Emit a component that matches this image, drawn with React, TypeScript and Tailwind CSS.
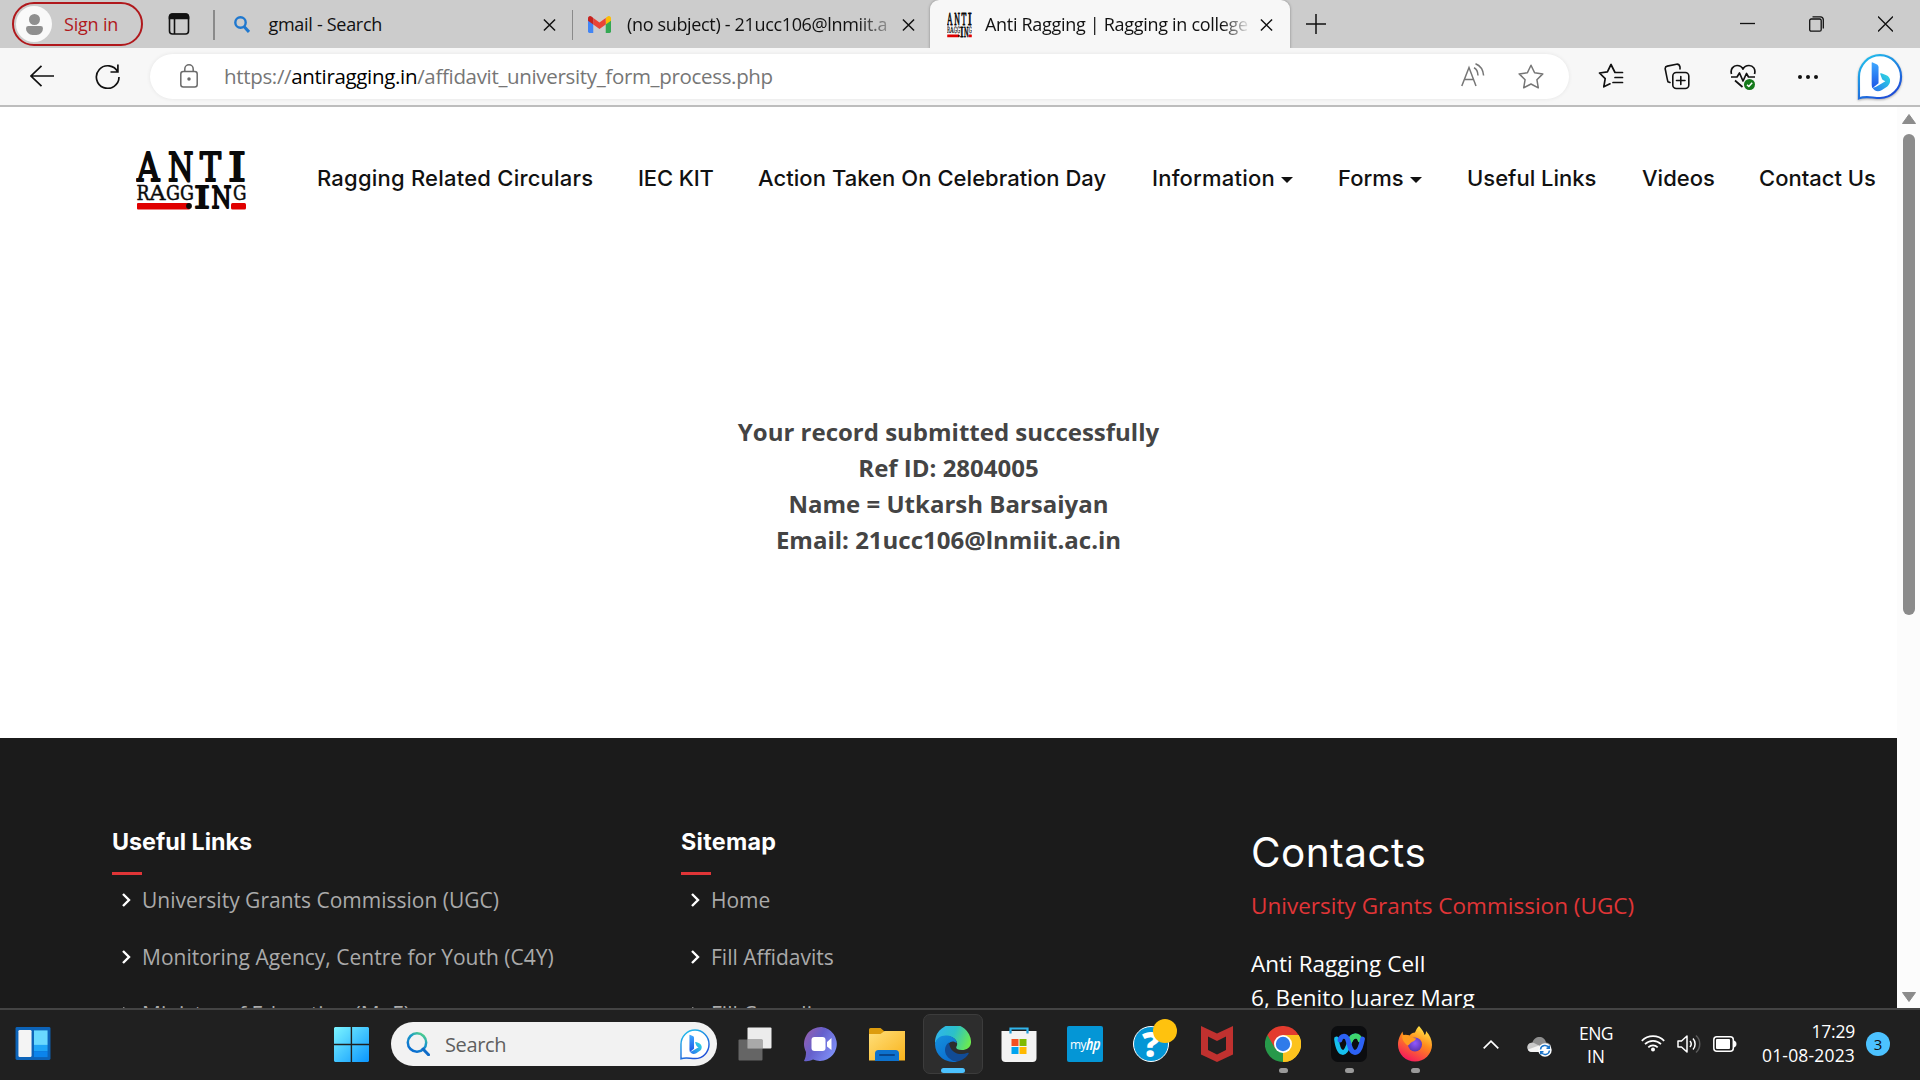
import type { ReactNode } from "react";

function BingMark({ className }: { className: string }) {
  return (
    <svg viewBox="0 0 46 47" className={className} fill="none">
      <defs>
        <linearGradient id="bingRing" x1="0" y1="0" x2="0.6" y2="1">
          <stop offset="0" stopColor="#22c8ee" />
          <stop offset="1" stopColor="#1d4fd8" />
        </linearGradient>
        <linearGradient id="bingStem" x1="0" y1="0" x2="0" y2="1">
          <stop offset="0" stopColor="#3fa8ff" />
          <stop offset="1" stopColor="#1b55e6" />
        </linearGradient>
        <linearGradient id="bingArm" x1="1" y1="0" x2="0" y2="1">
          <stop offset="0" stopColor="#2ddfe0" />
          <stop offset="1" stopColor="#2a72f0" />
        </linearGradient>
      </defs>
      <path d="M23 1.2C34.800 1.200 44.500 11 44.500 23.200S34.800 45 23 45C15 45 9 42.500 1.500 45.300C1.600 39 1.500 35 1.500 23.200C1.500 11 11.200 1.200 23 1.200Z" fill="#fff" stroke="url(#bingRing)" strokeWidth="2.200" />
      <path d="M15 8.500L19.500 10.500C20.800 11.200 21.500 12 21.500 13.500V30L15.200 35C14.700 33.500 14.500 32 14.500 30V9Z" fill="url(#bingStem)" />
      <path d="M15.200 34C17 38.500 21.500 39 25 36.800L30.500 33.200C33.800 30.600 34.500 25.500 31 22.600C29.500 21.300 26 20.200 24.200 19.600C23.300 19.400 23 20 23.300 20.800L25 25.200C25.300 26 25.800 26.400 26.500 26.800L28.500 27.800L19.500 33.200C17.800 34.200 16.300 34.500 15.200 34Z" fill="url(#bingArm)" />
    </svg>
  );
}

function AntiLogo({ className }: { className: string }) {
  const big: [string, number, number][] = [["A", 136, 22.5], ["N", 167, 25.5], ["T", 199, 21], ["I", 227, 18]];
  const small: [string, number, number][] = [["R", 135.5, 13], ["A", 148.5, 16], ["G", 165, 14], ["G", 179, 14], ["G", 232, 13.5]];
  return (
    <svg viewBox="135 149 111 61" preserveAspectRatio="none" className={className} fontFamily="'DejaVu Serif', serif">
      <rect x="136" y="202" width="53" height="6.500" rx="1" fill="#e00000" />
      <rect x="230" y="202" width="15" height="6.500" rx="1.500" fill="#e00000" />
      <g fill="#0a0a0a" stroke="#0a0a0a" strokeWidth="2" strokeLinejoin="round">
        {big.map(([c, x, w]) => (
          <text key={c} x={x} y="179.800" fontSize="38.500" textLength={w} lengthAdjust="spacingAndGlyphs">{c}</text>
        ))}
      </g>
      <g fill="#0a0a0a" stroke="#0a0a0a" strokeWidth="0.500">
        {small.map(([c, x, w]) => (
          <text key={x} x={x} y="199.300" fontSize="20.500" textLength={w} lengthAdjust="spacingAndGlyphs">{c}</text>
        ))}
      </g>
      <g fill="#0a0a0a" stroke="#0a0a0a" strokeWidth="1.800" strokeLinejoin="round">
        <text x="193" y="207.300" fontSize="30" textLength="16" lengthAdjust="spacingAndGlyphs">I</text>
        <text x="210.500" y="207.300" fontSize="30" textLength="20" lengthAdjust="spacingAndGlyphs">N</text>
        <circle cx="188" cy="205" r="2" />
      </g>
    </svg>
  );
}

function CloseX({ className }: { className: string }) {
  return (
    <svg viewBox="0 0 14 14" className={className} stroke="#111" strokeWidth="1.600" fill="none">
      <path d="M1 1L13 13M13 1L1 13" />
    </svg>
  );
}

function TabStrip() {
  return (
    <div className="flex h-[48px] items-start bg-[#cccccc] text-[18px]">
      <div className="ml-[12px] mt-[2px] flex h-[44px] w-[131px] items-center rounded-full border-[2px] border-[#b0181c]">
        <div className="ml-[2px] flex h-[36px] w-[36px] flex-col items-center justify-center gap-[1px] rounded-full bg-[#f9f9f9]">
          <div className="h-[11px] w-[11px] rounded-full bg-[#8f8f8f]" />
          <div className="h-[9px] w-[17px] rounded-b-[8px] rounded-t-[3px] bg-[#8f8f8f]" />
        </div>
        <span className="ml-[12px] tracking-[-0.2px] text-[#b0181c]">Sign in</span>
      </div>
      <svg viewBox="0 0 22 22" className="ml-[25px] mt-[13px] h-[22px] w-[22px]" fill="none" stroke="#111" strokeWidth="1.600">
        <rect x="1.500" y="1" width="19" height="20" rx="3" />
        <path d="M1.500 5V4A3 3 0 0 1 4.500 1H17.500A3 3 0 0 1 20.500 4V5.500H1.500Z" fill="#111" />
        <path d="M6.500 6V21" />
      </svg>
      <div className="ml-[23px] mt-[10px] h-[30px] w-[1.500px] bg-[#8a8a8a]" />
      <div className="flex h-[48px] w-[357px] items-center">
        <svg viewBox="0 0 16 17" className="ml-[19px] h-[17px] w-[16px]" fill="none" stroke="#1f78cf" strokeWidth="2.400">
          <circle cx="6.500" cy="6.500" r="5.200" />
          <path d="M10 10.500L15 16" strokeWidth="3" />
        </svg>
        <span className="ml-[19px] w-[274px] whitespace-nowrap tracking-[-0.3px] text-[#111]">gmail - Search</span>
        <CloseX className="mt-[2px] h-[14px] w-[13px]" />
      </div>
      <div className="mt-[10px] h-[30px] w-[1.500px] bg-[#8a8a8a]" />
      <div className="flex h-[48px] w-[357px] items-center">
        <svg viewBox="0 0 24 18" preserveAspectRatio="none" className="ml-[15px] h-[17px] w-[23px]">
          <path d="M0 4V16.500A1.500 1.500 0 0 0 1.500 18H5.500V6Z" fill="#4285f4" />
          <path d="M24 4V16.500A1.500 1.500 0 0 1 22.500 18H18.500V6Z" fill="#34a853" />
          <path d="M18.500 2L20 .8C22 -.7 24 .5 24 2.500V5L18.500 9Z" fill="#fbbc04" />
          <path d="M5.500 9V2L12 6.800L18.500 2V9L12 13.800Z" fill="#ea4335" />
          <path d="M0 2.500C0 .5 2 -.7 4 .8L5.500 2V9L0 5Z" fill="#c5221f" />
        </svg>
        <span className="ml-[16px] w-[261px] overflow-hidden whitespace-nowrap tracking-[-0.34px] text-[#111] [mask-image:linear-gradient(to_right,black_88%,transparent_105%)]">(no subject) - 21ucc106@lnmiit.a</span>
        <CloseX className="ml-[14px] mt-[2px] h-[14px] w-[13px]" />
      </div>
      <div className="flex h-[49px] w-[360px] items-center rounded-t-[9px] bg-[#f7f7f7] shadow-[0_0_3px_rgba(0,0,0,0.35)]">
        <AntiLogo className="ml-[17px] h-[26px] w-[25px]" />
        <span className="ml-[13px] w-[263px] overflow-hidden whitespace-nowrap tracking-[-0.3px] text-[#111] [mask-image:linear-gradient(to_right,black_90%,transparent_101%)]">Anti Ragging | Ragging in college</span>
        <CloseX className="ml-[12px] mt-[1px] h-[14px] w-[13px]" />
      </div>
      <svg viewBox="0 0 20 20" className="ml-[16px] mt-[14px] h-[20px] w-[20px]" stroke="#111" strokeWidth="1.500">
        <path d="M10 0V20M0 10H20" />
      </svg>
      <div className="ml-auto mr-[27px] mt-[16px] flex gap-[54px]">
        <svg viewBox="0 0 15 16" className="h-[16px] w-[15px]" stroke="#111" strokeWidth="1.300"><path d="M0 7.500H15" /></svg>
        <svg viewBox="0 0 15 16" className="h-[16px] w-[15px]" fill="none" stroke="#111" strokeWidth="1.300">
          <rect x=".7" y="3" width="11.500" height="12.200" rx="1.500" />
          <path d="M3.500 .8H11.500A3 3 0 0 1 14.300 3.600V12.500" />
        </svg>
        <svg viewBox="0 0 15 16" className="h-[16px] w-[15px]" stroke="#111" strokeWidth="1.300"><path d="M0 .5L15 15.500M15 .5L0 15.500" /></svg>
      </div>
    </div>
  );
}

function Toolbar() {
  return (
    <div className="relative flex h-[59px] items-start border-b-2 border-[#bdbdbd] bg-[#f7f7f7] pt-[6px]">
      <svg viewBox="0 0 24 22" className="ml-[30px] mt-[11px] h-[22px] w-[24px]" fill="none" stroke="#111" strokeWidth="1.700">
        <path d="M24 11H1M11.500 .8L1 11L11.500 21.200" />
      </svg>
      <svg viewBox="0 0 25 25" className="ml-[41px] mt-[10px] h-[25px] w-[25px]" fill="none" stroke="#111" strokeWidth="1.700">
        <path d="M22.800 8A11.300 11.300 0 1 0 24 13M22.900 .5V8H15.500" />
      </svg>
      <div className="ml-[30px] flex h-[45px] w-[1419px] items-center rounded-full bg-white shadow-[0_0_4px_rgba(0,0,0,0.08)]">
        <svg viewBox="0 0 18 24" className="ml-[30px] mt-[-1px] h-[24px] w-[18px]" fill="none" stroke="#6b6b6b" strokeWidth="1.500">
          <rect x=".8" y="7.500" width="16.400" height="15.500" rx="2.500" />
          <path d="M4.800 7.500V5A4.200 4.200 0 0 1 13.200 5V7.500" />
          <circle cx="9" cy="15" r="1" fill="#6b6b6b" />
        </svg>
        <span className="ml-[26px] mt-[-1px] whitespace-nowrap text-[20.500px] tracking-[-0.33px] text-[#767676]">
          https://<span className="text-black">antiragging.in</span>/affidavit_university_form_process.php
        </span>
        <svg viewBox="0 0 24 24" className="ml-auto mt-[-4px] h-[24px] w-[24px]" fill="none" stroke="#767676" strokeWidth="1.500">
          <path d="M.8 23L8 4.500L15 23M3.500 16.500H12.500M13 4.800C15.500 6 16.800 8.500 17 12.500M14.500 .8C19 2.500 22 6.500 22.600 12.500" />
        </svg>
        <svg viewBox="0 0 26 25" className="ml-[33px] mr-[25px] h-[25px] w-[26px]" fill="none" stroke="#767676" strokeWidth="1.500" strokeLinejoin="round">
          <path d="M13 1.200L16.600 8.700L24.800 9.900L18.900 15.700L20.300 23.800L13 20L5.700 23.800L7.100 15.700L1.200 9.900L9.400 8.700Z" />
        </svg>
      </div>
      <svg viewBox="0 0 26 26" className="ml-[29px] mt-[9px] h-[26px] w-[26px]" fill="none" stroke="#111" strokeWidth="1.700" strokeLinejoin="round" strokeLinecap="round">
        <path d="M24.500 9.500H17L13 1.500L9.400 8.800L1.500 10L7.200 15.700L5.800 23.800L12 20.800M17 14.500H24.500M15 19.500H24.500" />
      </svg>
      <svg viewBox="0 0 26 28" className="ml-[40px] mt-[9px] h-[28px] w-[26px]" fill="none" stroke="#111" strokeWidth="1.600" strokeLinecap="round">
        <rect x="8.800" y="9.500" width="16" height="16" rx="3.500" />
        <path d="M16.800 13.500V21.500M12.500 17.500H21M6 19.500L4 18.800C3.500 18 1.800 8.500 1.200 6C1 4.500 2 3.400 3.300 3.100L12.500 1.200C14 1 15.500 2 16 4V6" />
      </svg>
      <svg viewBox="0 0 27 28" className="ml-[40px] mt-[10px] h-[28px] w-[27px]" fill="none" stroke="#111" strokeWidth="1.700" strokeLinejoin="round">
        <path d="M1.500 10C0 5 3.500 1.500 7 1.500C10 1.500 12 3 13 5C14 3 16 1.500 19 1.500C23 1.500 26 5 24.500 10M1 13H7L9.500 9L13 17L16.500 9.500L18.500 13H25M5 16.500L12.500 23" />
        <circle cx="19.500" cy="20.500" r="5.500" fill="#157a1b" stroke="none" />
        <path d="M17 20.700L18.800 22.500L22.200 18.800" stroke="#fff" strokeWidth="1.500" />
      </svg>
      <div className="ml-[41px] mt-[21px] flex gap-[4px]">
        <div className="h-[4px] w-[4px] rounded-full bg-[#111]" />
        <div className="h-[4px] w-[4px] rounded-full bg-[#111]" />
        <div className="h-[4px] w-[4px] rounded-full bg-[#111]" />
      </div>
      <BingMark className="ml-auto mr-[17px] mt-0 h-[46px] w-[46px] drop-shadow-[0_1px_1px_rgba(0,0,0,0.3)]" />
    </div>
  );
}

function Caret() {
  return <span className="ml-[6px] mt-[2px] border-x-[6px] border-t-[6px] border-x-transparent border-t-[#111]" />;
}

function SiteHeader() {
  return (
    <header className="flex h-[139px] items-center font-[Inter] text-[22px] font-medium text-[#111]">
      <AntiLogo className="ml-[136px] mt-[7px] h-[61px] w-[111px]" />
      <nav className="mt-[4px] flex whitespace-nowrap">
        <a className="ml-[70px] w-[321px] tracking-[0.22px]">Ragging Related Circulars</a>
        <a className="w-[120px] tracking-[-0.15px]">IEC KIT</a>
        <a className="w-[394px] tracking-[0.05px]">Action Taken On Celebration Day</a>
        <a className="flex w-[186px] items-center tracking-[0.2px]">Information<Caret /></a>
        <a className="flex w-[129px] items-center">Forms<Caret /></a>
        <a className="w-[175px]">Useful Links</a>
        <a className="w-[117px]">Videos</a>
        <a>Contact Us</a>
      </nav>
    </header>
  );
}

function LinkColumn({ title, links, className }: { title: ReactNode; links: string[]; className: string }) {
  return (
    <div className={className}>
      <h4 className="h-[43px] pt-[1px] font-[Inter] text-[23.300px] font-bold leading-[24px] text-white">{title}</h4>
      <div className="h-[3px] w-[30px] bg-[#e03537]" />
      <ul className="mt-[10px]">
        {links.map((l) => (
          <li key={l} className="flex h-[57px] items-start">
            <svg viewBox="0 0 9 14" className="ml-[10px] mt-[8px] h-[14px] w-[9px]" fill="none" stroke="#fff" strokeWidth="2.400">
              <path d="M1 1L7 7L1 13" />
            </svg>
            <span className="ml-[11px] whitespace-nowrap text-[21px] leading-[30px] text-[#aaaaaa]">{l}</span>
          </li>
        ))}
      </ul>
    </div>
  );
}

function Page() {
  return (
    <div className="flex h-[901px] overflow-hidden bg-white">
      <div className="w-[1897px]">
        <SiteHeader />
        <div className="h-[492px] pt-[168px] text-center text-[24px] font-bold leading-[36px] text-[#444]">
          <p>Your record submitted successfully</p>
          <p>Ref ID: 2804005</p>
          <p>Name = Utkarsh Barsaiyan</p>
          <p>Email: 21ucc106@lnmiit.ac.in</p>
        </div>
        <footer className="flex h-[400px] bg-[#1b1b1b] pl-[112px] pt-[91px]">
          <LinkColumn className="w-[569px]" title="Useful Links" links={["University Grants Commission (UGC)", "Monitoring Agency, Centre for Youth (C4Y)", "Ministry of Education (MoE)"]} />
          <LinkColumn className="w-[570px]" title={<span className="tracking-[0.3px]">Sitemap</span>} links={["Home", "Fill Affidavits", "Fill Compliance"]} />
          <div className="whitespace-nowrap text-[22.500px] leading-[34.500px] text-white">
            <h3 className="mt-[-1px] font-[Inter] text-[40.500px] leading-[50px] tracking-[0.5px]">Contacts</h3>
            <p className="mt-[11px] tracking-[0.02px] text-[#e03537]">University Grants Commission (UGC)</p>
            <p className="mt-[23px] tracking-[0.02px]">Anti Ragging Cell</p>
            <p className="tracking-[0.02px]">6, Benito Juarez Marg</p>
          </div>
        </footer>
      </div>
      <div className="flex w-[23px] flex-col items-center bg-[#fcfcfc]">
        <svg viewBox="0 0 14 10" className="mt-[7px] h-[10px] w-[14px]"><path d="M7 0.500L13.500 9.500H.5Z" fill="#8b8b8b" stroke="#8b8b8b" strokeLinejoin="round" /></svg>
        <div className="mt-[10px] h-[481px] w-[12px] rounded-full bg-[#8b8b8b]" />
        <svg viewBox="0 0 14 10" className="mb-[6px] mt-auto h-[10px] w-[14px]"><path d="M7 9.500L13.500 .5H.5Z" fill="#8b8b8b" stroke="#8b8b8b" strokeLinejoin="round" /></svg>
      </div>
    </div>
  );
}

function TaskItem({ children, active, running }: { children: ReactNode; active?: boolean; running?: boolean }) {
  return (
    <div className={active ? "mx-[3px] flex h-[60px] w-[60px] flex-col items-center rounded-[7px] border border-[#3c3c3c] bg-[#2d2d2d] pt-[11px]" : "flex h-[60px] w-[66px] flex-col items-center pt-[12px]"}>
      <div className="h-[36px] w-[36px]">{children}</div>
      {active && <div className="mt-[6px] h-[5px] w-[24px] rounded-full bg-[#4cc2ff]" />}
      {running && <div className="mt-[6px] h-[5px] w-[9px] rounded-full bg-[#9a9a9a]" />}
    </div>
  );
}

function Taskbar() {
  return (
    <div className="flex h-[72px] items-start border-t-2 border-[#444] bg-[#202020]">
      <svg viewBox="0 0 36 34" className="ml-[15px] mt-[17px] h-[33px] w-[36px]">
        <rect width="36" height="34" rx="1.500" fill="#0c63b8" />
        <rect x="3" y="3" width="13.500" height="28" rx="1.500" fill="#f4f4f4" />
        <rect x="19" y="3.500" width="14" height="15" fill="#69d9ff" />
        <rect x="19" y="18.500" width="14" height="6.500" fill="#1ea5f7" />
        <rect x="19" y="25" width="14" height="6" fill="#0b84ec" />
      </svg>
      <svg viewBox="0 0 35 35" className="ml-[283px] mt-[17px] h-[35px] w-[35px]">
        <defs>
          <linearGradient id="win" x1="0" y1="0" x2="35" y2="35" gradientUnits="userSpaceOnUse">
            <stop stopColor="#7cf5ff" /><stop offset="1" stopColor="#0a96ff" />
          </linearGradient>
        </defs>
        <path d="M1 0H16.700V16.700H0V1ZM18.100 0H34L35 1V16.700H18.100ZM0 18.300H16.700V35H1L0 34ZM18.100 18.300H35V34L34 35H18.100Z" fill="url(#win)" />
      </svg>
      <div className="ml-[22px] mt-[12px] flex h-[44px] w-[326px] items-center rounded-full bg-[#f2f2f2]">
        <svg viewBox="0 0 24 24" className="ml-[15px] h-[24px] w-[24px]" fill="none">
          <defs>
            <linearGradient id="mag" x1="1" y1="0" x2="0.400" y2="1">
              <stop offset="0" stopColor="#5fe07a" /><stop offset=".45" stopColor="#1b9ac8" /><stop offset="1" stopColor="#0a6fd0" />
            </linearGradient>
          </defs>
          <circle cx="11" cy="10.500" r="9.200" stroke="url(#mag)" strokeWidth="2.500" />
          <path d="M17 17L22.500 22.800" stroke="#0f6cc8" strokeWidth="3" strokeLinecap="round" />
        </svg>
        <span className="ml-[15px] mt-[1px] text-[20px] tracking-[-0.35px] text-[#5f5f5f]">Search</span>
        <BingMark className="ml-auto mr-[7px] h-[31px] w-[30px]" />
      </div>
      <div className="ml-[5px] mt-[4px] flex">
        <TaskItem>
          <svg viewBox="0 0 36 36">
            <rect x="10.500" y="1.500" width="24" height="21" rx="1" fill="#ececec" />
            <rect x="1.500" y="13.500" width="24" height="21" rx="1" fill="#6a6a6a" fillOpacity=".93" />
            <rect x="10.500" y="13.500" width="15" height="9" fill="#a9a9a9" />
          </svg>
        </TaskItem>
        <TaskItem>
          <svg viewBox="0 0 36 36">
            <defs><linearGradient id="chat" x1="0" y1="0" x2="1" y2=".6"><stop stopColor="#9c5ea8" /><stop offset=".5" stopColor="#6560cc" /><stop offset="1" stopColor="#7d8df5" /></linearGradient></defs>
            <path d="M18.500 1A17 17 0 1 1 10 33.500C7 35 4 35.500 1 35C2.500 32 3 29.500 3 26A17 17 0 0 1 18.500 1Z" fill="url(#chat)" />
            <rect x="8.500" y="11" width="14" height="14" rx="3" fill="#fff" />
            <path d="M24 16L28.500 12V24L24 20.500Z" fill="#fff" />
          </svg>
        </TaskItem>
        <TaskItem>
          <svg viewBox="0 0 36 36">
            <defs><linearGradient id="fold" x1="0" y1="0" x2="1" y2="1"><stop stopColor="#ffdf7a" /><stop offset="1" stopColor="#f9b31b" /></linearGradient></defs>
            <path d="M0 3.500A1.500 1.500 0 0 1 1.500 2H11.500L15 5V12H0Z" fill="#dd9c0e" />
            <path d="M0 8H11.500L15.500 5H36V34.500H0Z" fill="url(#fold)" />
            <path d="M6 35V27.500A3.500 3.500 0 0 1 9.500 24H26.500A3.500 3.500 0 0 1 30 27.500V35Z" fill="#0d72ce" />
            <path d="M11 29H25" stroke="#08468c" strokeWidth="2" strokeLinecap="round" />
          </svg>
        </TaskItem>
        <TaskItem active>
          <svg viewBox="0 0 36 36">
            <defs>
              <linearGradient id="e1" x1="0" y1=".3" x2="1" y2=".6"><stop stopColor="#2fb4ee" /><stop offset=".5" stopColor="#2cc0c8" /><stop offset="1" stopColor="#6bea4f" /></linearGradient>
              <linearGradient id="e2" x1="0" y1="0" x2=".6" y2="1"><stop stopColor="#1590dd" /><stop offset="1" stopColor="#0b6fd0" /></linearGradient>
            </defs>
            <path d="M0 18A18 18 0 0 1 36 15C36.500 21 32 24 27 24C22 24 20.500 22.500 21.500 20.500C23.500 17 21 12 15 10.500C8 9 1.500 13 0 18Z" fill="url(#e1)" />
            <path d="M0 18C1 12 6 9 12 9.500C18 10 21.500 13.500 21.800 17C17 13 11.500 17 12 23.500C12.500 29.500 17 34.500 22.500 35.400A18 18 0 0 1 0 18Z" fill="url(#e2)" />
            <path d="M14 16.500C10 19 9 24 11 28.500C13.500 33 18 35.500 22.500 35.400C27.500 34.500 31.500 31.500 33.700 27.500C34 26.800 33.300 26.400 32.600 26.800C25 30 15 27.500 14 16.500Z" fill="#114b95" />
          </svg>
        </TaskItem>
        <TaskItem>
          <svg viewBox="0 0 36 36">
            <path d="M9.500 8V2.500H26.500V8" fill="none" stroke="#30b4ea" strokeWidth="2.200" />
            <path d="M.5 5H35.500V32A4 4 0 0 1 31.500 36H4.500A4 4 0 0 1 .5 32Z" fill="#f3f3f3" />
            <path d="M9.500 7.500V5M26.500 7.500V5" stroke="#1f9bd8" strokeWidth="2.200" />
            <rect x="10.500" y="13" width="7" height="7" fill="#f25022" /><rect x="18.500" y="13" width="7" height="7" fill="#7fba00" />
            <rect x="10.500" y="21" width="7" height="7" fill="#00a4ef" /><rect x="18.500" y="21" width="7" height="7" fill="#ffb900" />
          </svg>
        </TaskItem>
        <TaskItem>
          <div className="flex h-[36px] w-[36px] items-center justify-center rounded-[2px] bg-[#0496d6] leading-none text-white">
            <span className="mt-[1px] text-[12px] tracking-[-0.5px]">my</span>
            <span className="mb-[2px] text-[17px] font-semibold italic tracking-[-0.3px] [font-stretch:75%]">hp</span>
          </div>
        </TaskItem>
        <TaskItem>
          <div className="relative h-[36px] w-[36px]">
            <div className="flex h-[36px] w-[36px] items-center justify-center rounded-full border-[1.500px] border-white bg-[#0496d6] text-[36px] font-extrabold leading-none text-white">?</div>
            <div className="absolute left-[20px] top-[-7px] h-[24px] w-[24px] rounded-full bg-[#ffc20e]" />
          </div>
        </TaskItem>
        <TaskItem>
          <svg viewBox="0 0 36 36"><path d="M2 0L18 7.500L34 0V28.500L18 36L2 28.500ZM9 10.500V24L18 28.500L27 24V10.500L18 15Z" fill="#c0312f" fillRule="evenodd" /></svg>
        </TaskItem>
        <TaskItem running>
          <svg viewBox="0 0 36 36">
            <path d="M18 18L2.400 9A18 18 0 0 1 33.600 9Z" fill="#e33b2e" />
            <path d="M18 18L33.600 9A18 18 0 0 1 18 36Z" fill="#fcc31e" />
            <path d="M18 18L18 36A18 18 0 0 1 2.400 9Z" fill="#27994a" />
            <path d="M18 9H33.600A18 18 0 0 1 18 36L25.800 22.500Z" fill="#fcc31e" />
            <path d="M2.400 9L10.200 22.500L18 18V9Z" fill="#e33b2e" />
            <circle cx="18" cy="18" r="9" fill="#fff" /><circle cx="18" cy="18" r="7.200" fill="#2f7bea" />
          </svg>
        </TaskItem>
        <TaskItem running>
          <svg viewBox="0 0 36 36" fill="none" strokeLinecap="round">
            <rect width="36" height="36" rx="7" fill="#0c0d0f" />
            <path d="M5.500 13C6.500 21 8.500 26.500 12 26.500C15 26.500 17 21 18.500 16.500C19.500 12.500 21.500 10 24.500 10" stroke="#16c0ee" strokeWidth="4.800" />
            <path d="M19 15C20.500 11.500 22 10 24.500 10C27 10 28.500 11.500 29 14" stroke="#3fd66e" strokeWidth="4.800" />
            <path d="M9 14C10 9.500 14.500 9 16.500 13C18.500 18 19 26.500 24 26.500C28.500 26.500 30 20 31.500 13" stroke="#2c62f5" strokeWidth="4.800" />
          </svg>
        </TaskItem>
        <TaskItem running>
          <svg viewBox="0 0 36 36">
            <defs>
              <linearGradient id="fx" x1=".8" y1="0" x2=".3" y2="1"><stop stopColor="#fff04a" /><stop offset=".45" stopColor="#ff8a1c" /><stop offset="1" stopColor="#f5155f" /></linearGradient>
              <radialGradient id="fp" cx=".5" cy=".4" r=".6"><stop stopColor="#9059ff" /><stop offset="1" stopColor="#5b35b0" /></radialGradient>
            </defs>
            <path d="M22 0C24.500 3 27 6 27.500 9C29 8 29 6.500 29 5C33 9 35 14 35 19A17 16.500 0 0 1 1 19C1 13 3 9.500 5.500 5.500C5.800 7.500 6 8.500 7 9.500C9 8.800 11 8.800 12.500 9.500C14 7.500 16 6.800 18 6.500C19 4 20 2 22 0Z" fill="url(#fx)" />
            <circle cx="18" cy="18.500" r="7" fill="url(#fp)" />
            <path d="M5 9.500C9 8 12.500 9 14 11.500L19 12.500C18.500 15 15.500 15.500 14 16.500C12.500 18 12 20 10 19C7.500 17 5 14 5 9.500Z" fill="#ff9b1f" />
          </svg>
        </TaskItem>
      </div>
      <svg viewBox="0 0 16 9" className="ml-[35px] mt-[30px] h-[9px] w-[16px]" fill="none" stroke="#fff" strokeWidth="1.700"><path d="M.7 8.300L8 1.200L15.300 8.300" /></svg>
      <svg viewBox="0 0 25 21" className="ml-[28px] mt-[26px] h-[21px] w-[25px]">
        <path d="M5 16C-1 15 -1 7 5.500 6.500C7 -1 18 -1 19 6.500C23 7 24 9 24 12L14 16Z" fill="#8e8e8e" />
        <path d="M.3 11C.5 7.500 4 6 7 7L15 11L8 16H5C2 16 .2 14 .3 11Z" fill="#c9c9c9" />
        <path d="M1 13.500L12 9.500L14 16H5C3 16 1.500 15 1 13.500Z" fill="#f4f4f4" />
        <circle cx="18" cy="14" r="6.700" fill="#fff" />
        <path d="M13.500 13.500A4.500 4.500 0 0 1 22 12M22.500 14.500A4.500 4.500 0 0 1 14 16M22.300 9.500V12.300H19.500M13.700 18.500V15.700H16.500" fill="none" stroke="#1b74c9" strokeWidth="1.500" />
      </svg>
      <div className="ml-[25px] mt-[12px] w-[38px] text-center text-[17.500px] leading-[23px] text-white">
        <p className="tracking-[-0.5px]">ENG</p>
        <p>IN</p>
      </div>
      <svg viewBox="0 0 24 18" className="ml-[26px] mt-[24px] h-[18px] w-[24px]" fill="none" stroke="#fff" strokeWidth="1.700">
        <path d="M.8 6.800A15.700 15.700 0 0 1 23.200 6.800M4 10.200A11.300 11.300 0 0 1 20 10.200M7.300 13.300A6.700 6.700 0 0 1 16.700 13.300" />
        <circle cx="12" cy="15.500" r="2" fill="#fff" stroke="none" />
      </svg>
      <svg viewBox="0 0 24 20" className="ml-[12px] mt-[24px] h-[20px] w-[24px]" fill="none" stroke="#fff" strokeWidth="1.500" strokeLinejoin="round">
        <path d="M1 7V13H4.500L10 18V2L4.500 7ZM13 7C14.500 8.800 14.500 11.200 13 13M16 4.500C18.800 7.500 18.800 12.500 16 15.500" />
        <path d="M19 1.500C24 6 24 14 19 18.500" stroke="#5a5a5a" />
      </svg>
      <svg viewBox="0 0 24 16" className="ml-[12px] mt-[26px] h-[16px] w-[24px]">
        <rect x=".8" y=".8" width="19.500" height="14.400" rx="3" fill="none" stroke="#fff" strokeWidth="1.500" />
        <rect x="3" y="3" width="14" height="10" rx="1" fill="#fff" />
        <path d="M21.500 5C23.500 5.500 23.500 10.500 21.500 11Z" fill="#fff" stroke="#fff" />
      </svg>
      <div className="ml-auto mt-[9px] text-right text-[17.500px] leading-[24px] text-white">
        <p className="tracking-[-0.2px]">17:29</p>
        <p className="tracking-[0.17px]">01-08-2023</p>
      </div>
      <div className="ml-[11px] mr-[30px] mt-[22px] flex h-[24px] w-[24px] items-center justify-center rounded-full bg-[#4cc2ff] text-[15px] leading-none text-[#111]">3</div>
    </div>
  );
}

export default function App() {
  return (
    <div className="h-[1080px] w-[1920px] overflow-hidden font-['Open_Sans',sans-serif]">
      <TabStrip />
      <Toolbar />
      <Page />
      <Taskbar />
    </div>
  );
}
